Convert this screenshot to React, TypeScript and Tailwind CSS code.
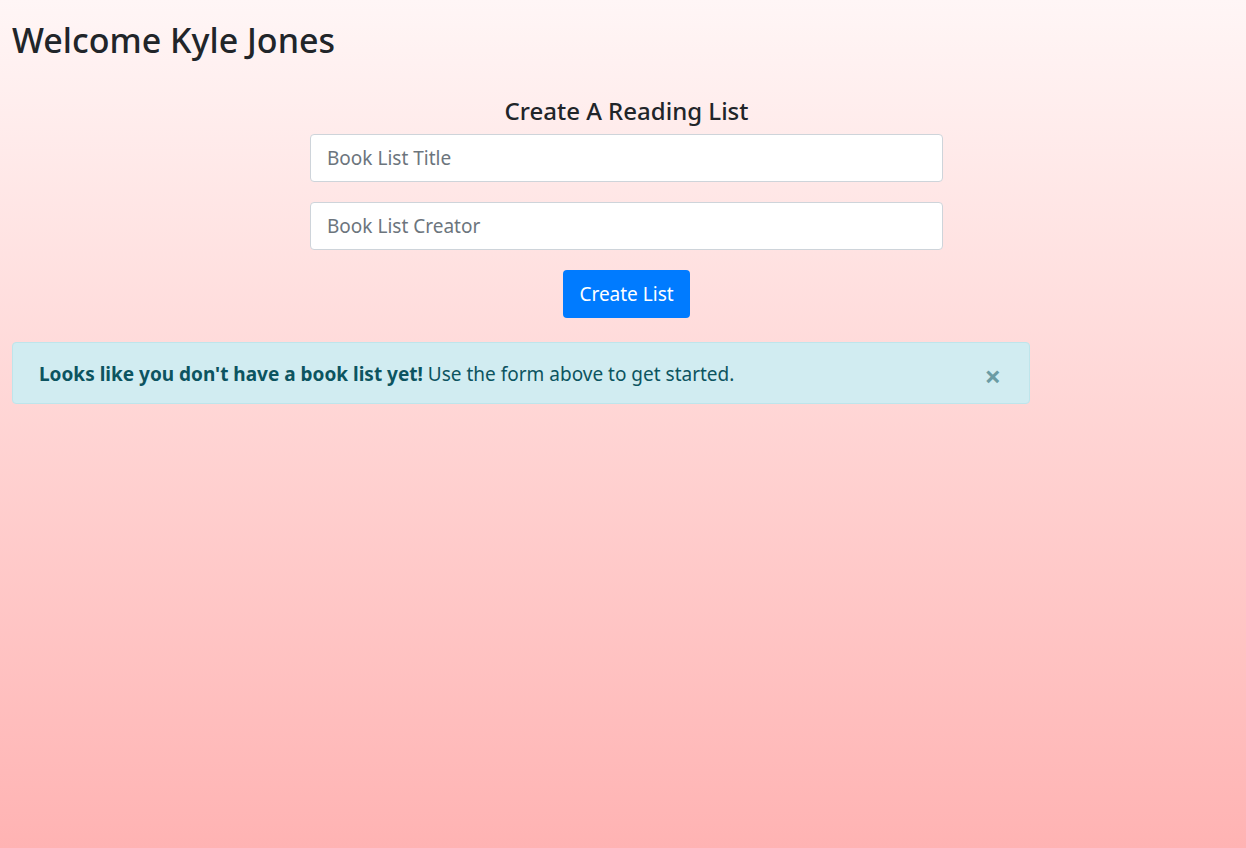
import React from 'react'

// reading list landing page
export default function App() {
  return (
    <div
      className="min-h-[848px] w-full bg-gradient-to-b from-[#fff6f6] to-[#ffb3b3] px-3 text-[#212529]"
      style={{ fontFamily: '"Noto Sans", "Open Sans", sans-serif' }}
    >
      <h2 className="pt-[16px] text-[34px] leading-[48px] font-medium">Welcome Kyle Jones</h2>

      <div className="mt-[32px] ml-[298px] w-[633px]">
        <h4 className="text-center text-[24px] leading-[30px] font-medium">Create A Reading List</h4>
        <form className="mt-[8px] flex flex-col gap-[20px]" onSubmit={(e) => e.preventDefault()}>
          <input
            type="text"
            placeholder="Book List Title"
            className="h-[48px] w-full rounded-[4px] border border-[#ced4da] bg-white px-4 text-[19px] placeholder-[#6c757d] outline-none"
          />
          <input
            type="text"
            placeholder="Book List Creator"
            className="h-[48px] w-full rounded-[4px] border border-[#ced4da] bg-white px-4 text-[19px] placeholder-[#6c757d] outline-none"
          />
          <div className="flex justify-center">
            <button
              type="submit"
              className="h-[48px] rounded-[4px] bg-[#007bff] px-4 text-[19px] text-white"
            >
              Create List
            </button>
          </div>
        </form>
      </div>

      <div className="mt-[24px] flex h-[62px] w-[1018px] items-center justify-between rounded-[4px] border border-[#bee5eb] bg-[#d1ecf1] pt-[3px] pr-[28px] pl-[26px] text-[19px] text-[#0c5460]">
        <p>
          <strong>Looks like you don't have a book list yet!</strong> Use the form above to get started.
        </p>
        <button type="button" className="pt-[2px] text-[29px] leading-none font-bold text-[#6b9ca4]">
          ×
        </button>
      </div>
    </div>
  )
}
